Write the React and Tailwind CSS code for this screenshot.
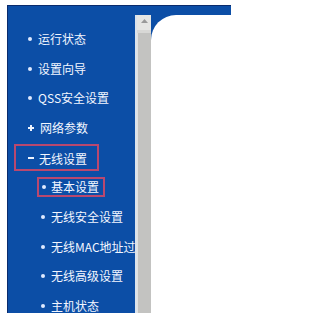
import React from 'react';

const menu = [
  { label: '运行状态', mark: 'dot', level: 0 },
  { label: '设置向导', mark: 'dot', level: 0 },
  { label: 'QSS安全设置', mark: 'dot', level: 0 },
  { label: '网络参数', mark: 'plus', level: 0 },
  { label: '无线设置', mark: 'minus', level: 0, boxed: true },
  { label: '基本设置', mark: 'dot', level: 1, boxed: true },
  { label: '无线安全设置', mark: 'dot', level: 1 },
  { label: '无线MAC地址过滤', mark: 'dot', level: 1 },
  { label: '无线高级设置', mark: 'dot', level: 1 },
  { label: '主机状态', mark: 'dot', level: 1 },
];

const Mark = ({ type }) => {
  if (type === 'plus') {
    return (
      <span className="relative w-[6px] h-[6px] shrink-0">
        <span className="absolute left-0 top-[2px] w-[6px] h-[2px] bg-[#eef3ff]" />
        <span className="absolute left-[2px] top-0 w-[2px] h-[6px] bg-[#eef3ff]" />
      </span>
    );
  }
  if (type === 'minus') {
    return <span className="w-[6px] h-[2px] bg-[#eef3ff] shrink-0" />;
  }
  return <span className="w-[4px] h-[4px] rounded-full bg-[#dfe9ff] shrink-0" />;
};

const MenuItem = ({ item }) => {
  // top-level rows sit at x=28, sub rows at x=41 (sidebar starts at x=8)
  if (item.boxed && item.level === 0) {
    return (
      <div className="h-[29.7px] flex items-center">
        <span className="ml-[6px] w-[85px] h-[27px] border-2 border-[#b9486f] flex items-center pl-[12px] gap-[5px]">
          <Mark type={item.mark} />
          <span className="pt-[2px]">{item.label}</span>
        </span>
      </div>
    );
  }
  if (item.boxed) {
    return (
      <div className="h-[29.7px] flex items-center">
        <span className="ml-[29px] w-[68px] h-[20px] border-2 border-[#b9486f] flex items-center pl-[3px] gap-[5px]">
          <Mark type={item.mark} />
          <span>{item.label}</span>
        </span>
      </div>
    );
  }
  return (
    <div
      className={`h-[29.7px] flex items-center gap-[6px] ${item.level ? 'pl-[33px]' : 'pl-[20px]'}`}
    >
      <Mark type={item.mark} />
      <span>{item.label}</span>
    </div>
  );
};

const App = () => {
  return (
    <div className="w-[231px] h-[313px] overflow-hidden bg-white pl-[7px] pt-[5px]">
      <div className="h-full border-l border-t border-[#0a2b6c] bg-[#0c4ea6] pt-[9px] flex flex-col">
        <div className="flex flex-1 min-h-0">
          {/* Left menu */}
          <div
            className="w-[127px] shrink-0 overflow-hidden whitespace-nowrap pt-[9px] text-[12px] leading-none text-[#f2f6ff]"
            style={{ fontFamily: '"Noto Sans CJK SC", "Noto Sans", sans-serif' }}
          >
            {menu.map((item) => (
              <MenuItem key={item.label} item={item} />
            ))}
          </div>

          {/* Scrollbar */}
          <div className="w-[2px] bg-[#dbe3ec] shrink-0" />
          <div className="w-[14px] shrink-0 flex flex-col bg-[#c3c3c1]">
            <div className="h-[15px] bg-[#e6e6e4] flex items-start justify-center pt-[4px]">
              <svg width="7" height="4" viewBox="0 0 7 4">
                <polygon points="3.5,0 7,4 0,4" fill="#9a9a9a" />
              </svg>
            </div>
            <div className="h-[3px] bg-[#d8d8d6]" />
            <div className="flex-1 border-l border-[#e2e2e0]" />
          </div>

          {/* Content panel */}
          <div className="flex-1 bg-white rounded-tl-[25px]" />
        </div>
      </div>
    </div>
  );
};

export default App;
